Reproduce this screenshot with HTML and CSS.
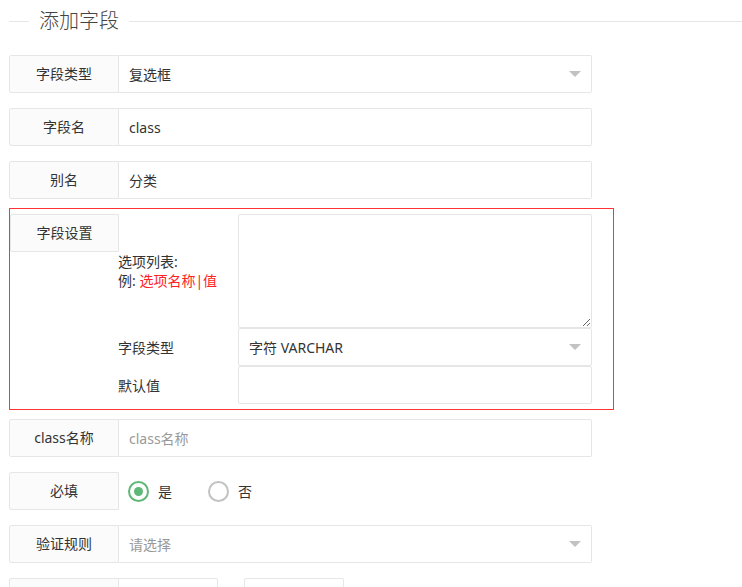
FILE: index.html
```html
<!DOCTYPE html>
<html lang="zh-CN">
<head>
    <meta charset="UTF-8">
    <meta name="viewport" content="width=device-width, initial-scale=1.0">
    <title>添加字段</title>
    <link rel="stylesheet" href="styles.css">
</head>
<body>
    <div class="page">
        <fieldset class="field-title">
            <legend>添加字段</legend>
        </fieldset>
        <form class="field-form">
            <div class="form-item">
                <label class="form-label">字段类型</label>
                <div class="select"><span>复选框</span><i class="edge"></i></div>
            </div>
            <div class="form-item">
                <label class="form-label">字段名</label>
                <input class="input" type="text" name="name" value="class">
            </div>
            <div class="form-item">
                <label class="form-label">别名</label>
                <input class="input" type="text" name="alias" value="分类">
            </div>
            <div class="field-settings">
                <label class="form-label">字段设置</label>
                <div class="settings-grid">
                    <div class="sub-label">
                        <div>选项列表:<br>例: <span class="red">选项名称|值</span></div>
                    </div>
                    <textarea class="textarea" name="options"></textarea>
                    <div class="sub-label">字段类型</div>
                    <div class="select"><span>字符 VARCHAR</span><i class="edge"></i></div>
                    <div class="sub-label">默认值</div>
                    <input class="input" type="text" name="default">
                </div>
            </div>
            <div class="form-item">
                <label class="form-label">class名称</label>
                <input class="input" type="text" name="class" placeholder="class名称">
            </div>
            <div class="form-item">
                <label class="form-label">必填</label>
                <div class="radio-group">
                    <div class="radio checked"><i class="radio-icon"></i>是</div>
                    <div class="radio"><i class="radio-icon"></i>否</div>
                </div>
            </div>
            <div class="form-item">
                <label class="form-label">验证规则</label>
                <div class="select"><span class="placeholder">请选择</span><i class="edge"></i></div>
            </div>
            <div class="form-item">
                <label class="form-label"></label>
                <input class="input input-inline" type="text" name="min">
                <div class="form-mid"></div>
                <input class="input input-inline bordered" type="text" name="max">
            </div>
        </form>
    </div>
</body>
</html>
```

FILE: styles.css
```css
html, body {
    margin: 0;
    padding: 0;
    overflow: hidden;
}
body {
    font-family: "Noto Sans", "Noto Sans CJK SC", sans-serif;
    font-size: 14px;
    color: #333;
    background-color: #fff;
}
.page {
    padding-left: 9px;
}
.field-title {
    margin: 7px 0 20px;
    padding: 0;
    border: none;
    border-top: 1px solid #e6e6e6;
}
.field-title legend {
    margin-left: 20px;
    padding: 0 10px;
    font-size: 20px;
    font-weight: 300;
    line-height: 28px;
    color: #444;
}
.field-form {
    width: 583px;
}
.form-item {
    display: flex;
    height: 38px;
    margin-bottom: 15px;
}
.form-label {
    box-sizing: border-box;
    width: 110px;
    height: 38px;
    flex-shrink: 0;
    padding: 8px 5px;
    line-height: 20px;
    text-align: center;
    background-color: #fbfbfb;
    border: 1px solid #e6e6e6;
    border-radius: 2px 0 0 2px;
}
.input,
.select {
    box-sizing: border-box;
    flex: 1;
    min-width: 0;
    height: 38px;
    margin: 0;
    padding: 0 10px;
    font-family: inherit;
    font-size: 14px;
    color: #333;
    background-color: #fff;
    border: 1px solid #e6e6e6;
    border-left: none;
    border-radius: 0 2px 2px 0;
    outline: none;
}
.input::placeholder,
.placeholder {
    color: #999;
}
.select {
    display: flex;
    align-items: center;
    justify-content: space-between;
}
.edge {
    width: 0;
    height: 0;
    border-style: solid;
    border-width: 6px 6px 0;
    border-color: #c2c2c2 transparent transparent;
}
.field-settings {
    display: flex;
    align-items: flex-start;
    box-sizing: border-box;
    width: 605px;
    margin: -6px 0 9px;
    padding: 5px 21px 5px 0;
    border: 1px solid #f33;
}
.field-settings .form-label {
    width: 109px;
}
.settings-grid {
    flex: 1;
    display: grid;
    grid-template-columns: 119px 1fr;
    grid-template-rows: 114px 38px 38px;
}
.sub-label {
    display: flex;
    align-items: center;
    margin-left: -1px;
    line-height: 19px;
    white-space: nowrap;
}
.settings-grid .input,
.settings-grid .select {
    border-left: 1px solid #e6e6e6;
    border-radius: 2px;
}
.textarea {
    box-sizing: border-box;
    width: 100%;
    height: 114px;
    margin: 0;
    padding: 6px 10px;
    font-family: inherit;
    font-size: 14px;
    border: 1px solid #e6e6e6;
    border-radius: 2px;
    outline: none;
}
.red {
    color: #f22;
}
.radio-group {
    display: flex;
    align-items: center;
    padding-left: 9px;
}
.radio {
    display: flex;
    align-items: center;
    margin-right: 36px;
    cursor: pointer;
}
.radio-icon {
    box-sizing: border-box;
    width: 21px;
    height: 21px;
    margin-right: 9px;
    border: 2px solid #c2c2c2;
    border-radius: 50%;
    display: flex;
    align-items: center;
    justify-content: center;
}
.radio.checked .radio-icon {
    border-color: #5fb878;
}
.radio.checked .radio-icon::after {
    content: "";
    width: 9px;
    height: 9px;
    border-radius: 50%;
    background-color: #5fb878;
}
.input-inline {
    flex: none;
    width: 99px;
}
.input-inline.bordered {
    width: 100px;
    border-left: 1px solid #e6e6e6;
    border-radius: 2px;
}
.form-mid {
    width: 26px;
}
```
